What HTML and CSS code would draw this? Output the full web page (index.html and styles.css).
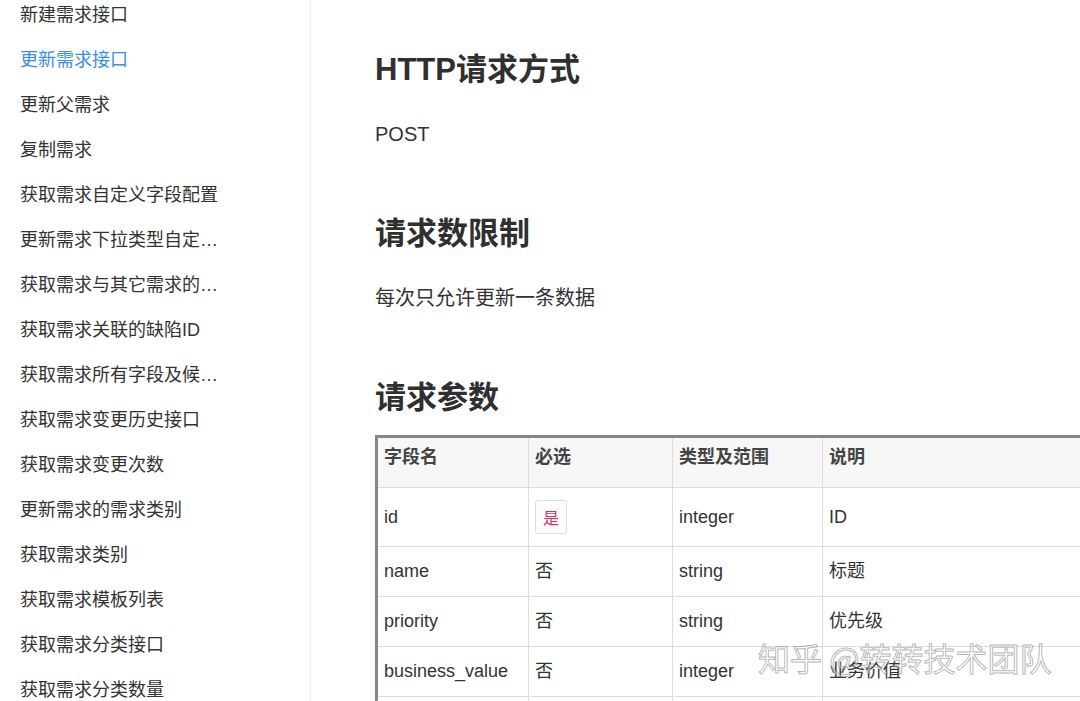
FILE: index.html
```html
<!DOCTYPE html>
<html lang="zh-CN">
<head>
    <meta charset="UTF-8">
    <meta name="viewport" content="width=device-width, initial-scale=1.0">
    <title>更新需求接口</title>
    <link rel="stylesheet" href="styles.css">
</head>
<body>
    <div class="page">
        <!-- 左侧接口目录 -->
        <aside class="sidebar">
            <ul class="nav-list">
                <li class="nav-item">新建需求接口</li>
                <li class="nav-item active">更新需求接口</li>
                <li class="nav-item">更新父需求</li>
                <li class="nav-item">复制需求</li>
                <li class="nav-item">获取需求自定义字段配置</li>
                <li class="nav-item">更新需求下拉类型自定义字段</li>
                <li class="nav-item">获取需求与其它需求的关联关系</li>
                <li class="nav-item">获取需求关联的缺陷ID</li>
                <li class="nav-item">获取需求所有字段及候选值</li>
                <li class="nav-item">获取需求变更历史接口</li>
                <li class="nav-item">获取需求变更次数</li>
                <li class="nav-item">更新需求的需求类别</li>
                <li class="nav-item">获取需求类别</li>
                <li class="nav-item">获取需求模板列表</li>
                <li class="nav-item">获取需求分类接口</li>
                <li class="nav-item">获取需求分类数量</li>
            </ul>
        </aside>

        <!-- 接口文档 -->
        <main class="doc">
            <h2 class="first">HTTP请求方式</h2>
            <p>POST</p>

            <h2>请求数限制</h2>
            <p>每次只允许更新一条数据</p>

            <h2>请求参数</h2>
            <table class="params">
                <colgroup>
                    <col class="col-name">
                    <col class="col-required">
                    <col class="col-type">
                    <col class="col-desc">
                </colgroup>
                <thead>
                    <tr>
                        <th>字段名</th>
                        <th>必选</th>
                        <th>类型及范围</th>
                        <th>说明</th>
                    </tr>
                </thead>
                <tbody>
                    <tr>
                        <td>id</td>
                        <td><code class="required">是</code></td>
                        <td>integer</td>
                        <td>ID</td>
                    </tr>
                    <tr>
                        <td>name</td>
                        <td>否</td>
                        <td>string</td>
                        <td>标题</td>
                    </tr>
                    <tr>
                        <td>priority</td>
                        <td>否</td>
                        <td>string</td>
                        <td>优先级</td>
                    </tr>
                    <tr>
                        <td>business_value</td>
                        <td>否</td>
                        <td>integer</td>
                        <td>业务价值</td>
                    </tr>
                    <tr>
                        <td>status</td>
                        <td>否</td>
                        <td>string</td>
                        <td>状态</td>
                    </tr>
                </tbody>
            </table>
        </main>
    </div>

    <div class="watermark">知乎 @转转技术团队</div>
</body>
</html>
```

FILE: styles.css
```css
/* 页面基础 */
body {
    margin: 0;
    padding: 0;
    font-family: "Liberation Sans", "Noto Sans CJK SC", sans-serif;
    color: #333;
    background: #fff;
    overflow: hidden;
}

.page {
    display: flex;
    height: 701px;
    overflow: hidden;
}

/* 左侧目录 */
.sidebar {
    width: 310px;
    flex-shrink: 0;
    border-right: 1px solid #eee;
}

.nav-list {
    list-style: none;
    margin: -7px 0 0;
    padding: 0 0 0 20px;
}

.nav-item {
    width: 200px;
    padding: 10px 0;
    font-size: 18px;
    line-height: 25px;
    color: #333;
    white-space: nowrap;
    overflow: hidden;
    text-overflow: ellipsis;
    cursor: pointer;
}

.nav-item.active {
    color: #3b8ee3;
}

/* 文档内容 */
.doc {
    flex: 1;
    min-width: 0;
    padding-left: 64px;
    overflow: hidden;
}

.doc h2 {
    margin: 66px 0 17px;
    font-size: 31px;
    line-height: 40px;
    font-weight: bold;
    color: #2f2f2f;
}

.doc h2.first {
    margin-top: 50px;
}

.doc p {
    margin: 30px 0 0;
    font-size: 20px;
    line-height: 28px;
}

/* 参数表格 */
.params {
    width: 820px;
    table-layout: fixed;
    border-collapse: collapse;
    border-top: 3px solid #878787;
    border-left: 3px solid #878787;
    font-size: 18px;
}

.col-name { width: 152px; }
.col-required { width: 144px; }
.col-type { width: 150px; }

.params th,
.params td {
    border: 1px solid #ddd;
    text-align: left;
    color: #333;
}

.params th {
    padding: 6px 6px 17px;
    line-height: 26px;
    font-weight: bold;
    color: #444;
    background: #f7f7f7;
}

.params td {
    padding: 12px 6px;
    line-height: 25px;
}

.required {
    display: inline-block;
    padding: 4px 7px;
    font-family: "Noto Sans CJK SC", sans-serif;
    font-size: 16px;
    line-height: 24px;
    color: #d9325f;
    background: #fcfcfc;
    border: 1px solid #ddd;
    border-radius: 3px;
    vertical-align: middle;
}

/* 水印 */
.watermark {
    position: absolute;
    left: 758px;
    top: 636px;
    font-family: "Noto Sans CJK SC", sans-serif;
    font-size: 32px;
    line-height: 42px;
    color: rgba(255, 255, 255, 0.45);
    -webkit-text-stroke: 1px rgba(90, 90, 90, 0.45);
    pointer-events: none;
}
```
